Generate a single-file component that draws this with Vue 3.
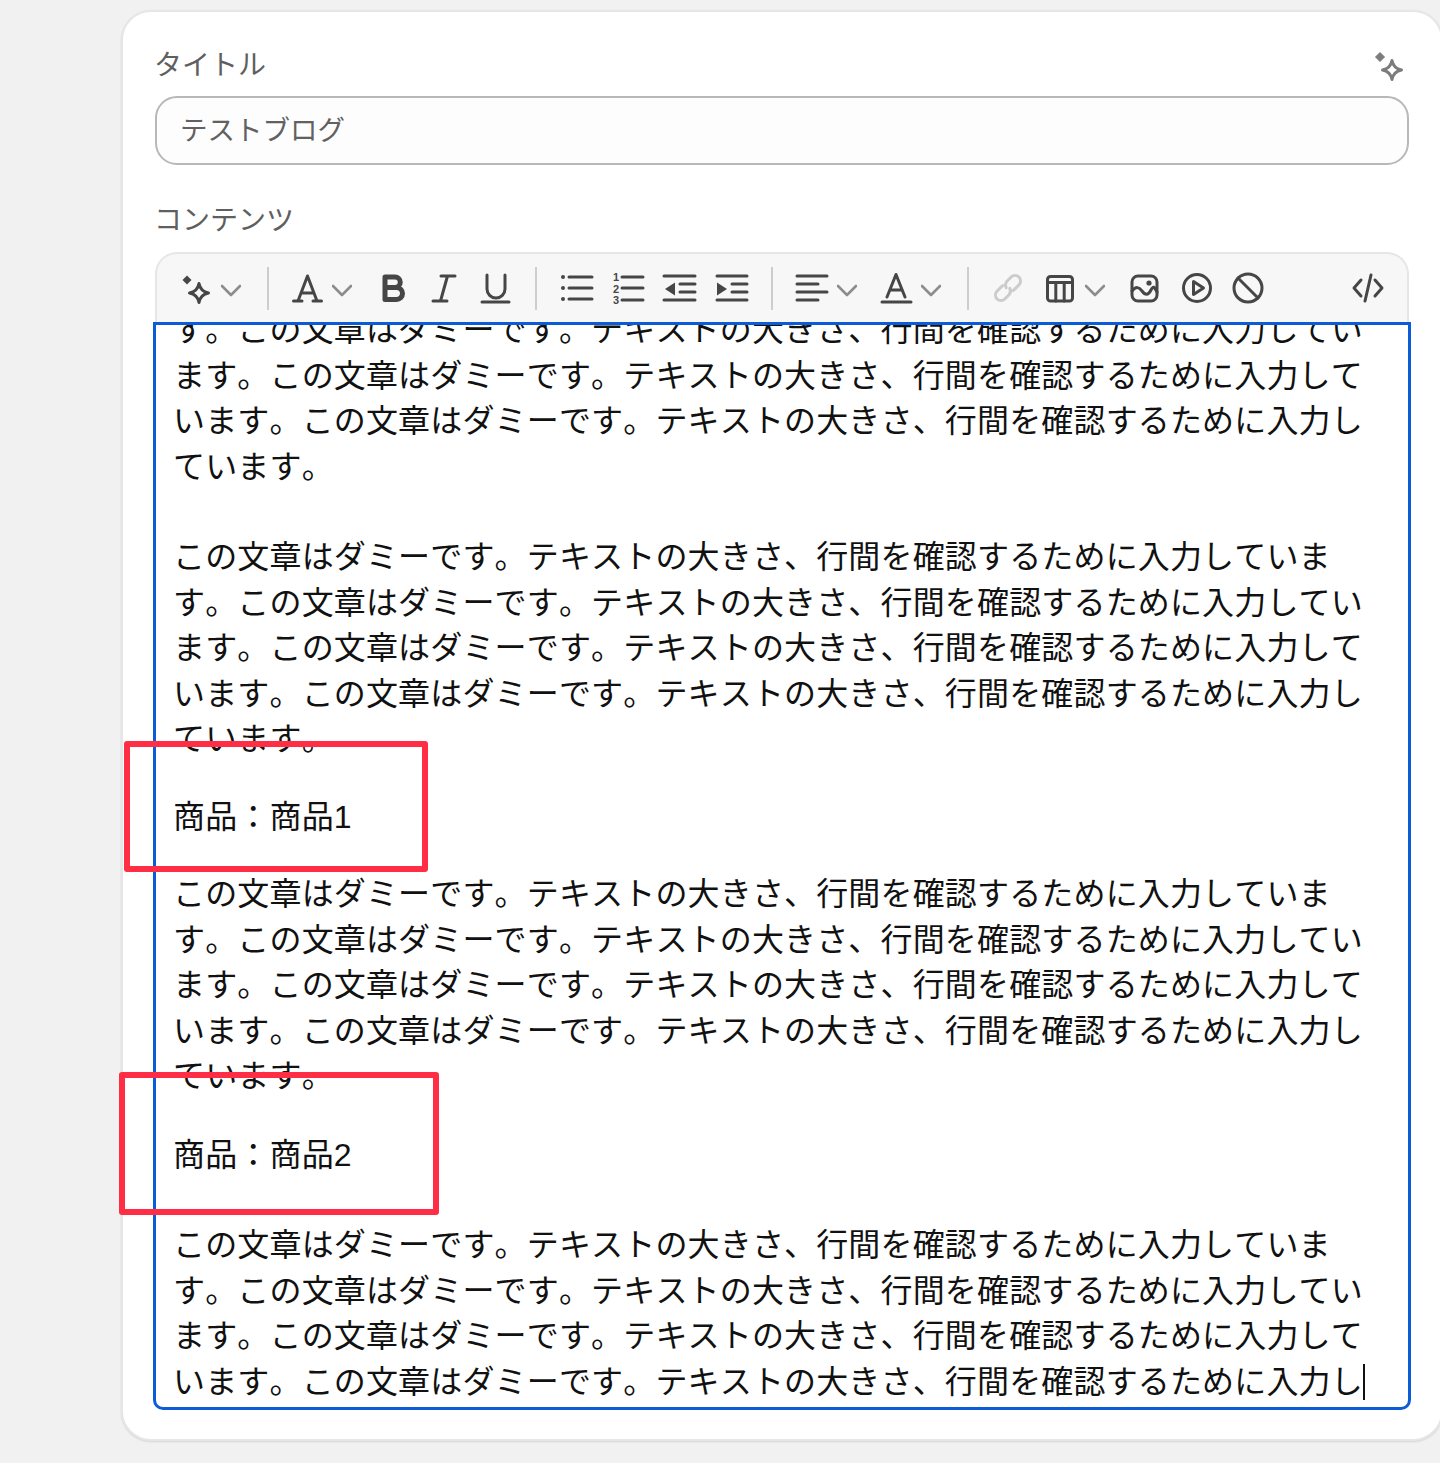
<script setup>
const sentence = 'この文章はダミーです。テキストの大きさ、行間を確認するために入力しています。'
const full = sentence.repeat(4)
const partial = full.slice(0, 147)
</script>

<template>
  <div class="page">
    <section class="card">
      <div class="label-row">
        <label class="label">タイトル</label>
        <svg class="ai-top" width="36" height="36" viewBox="0 0 36 36">
          <path class="spark-dot" d="M12 6.5 16.5 11 12 15.5 7.5 11Z" />
          <path class="spark" d="M24 14.5Q25.5 22.5 33.5 24 25.5 25.5 24 33.5 22.5 25.5 14.5 24 22.5 22.5 24 14.5Z" />
        </svg>
      </div>
      <div class="input"><span>テストブログ</span></div>
      <label class="label label-content">コンテンツ</label>

      <div class="toolbar">
        <div class="pair">
          <svg class="ic" viewBox="3 1 36 36">
            <path class="fill" d="M12 6.5 16.5 11 12 15.5 7.5 11Z" />
            <path d="M24 14.5Q25.5 22.5 33.5 24 25.5 25.5 24 33.5 22.5 25.5 14.5 24 22.5 22.5 24 14.5Z" />
          </svg>
          <svg class="chev" viewBox="0 0 20 36"><path d="M1 16 10 25 19 16" /></svg>
        </div>
        <span class="sep sep-first"></span>

        <div class="group group-format">
          <div class="pair pair-gap">
            <svg class="ic" viewBox="0 0 36 36"><path d="M9 31 18.5 6 28 31M12 23H25M4.5 31H13M24 31H32.5" /></svg>
            <svg class="chev" viewBox="0 0 20 36"><path d="M1 16 10 25 19 16" /></svg>
          </div>
          <svg class="ic" viewBox="0 0 36 36">
            <path class="bold" d="M10 7H20A5.25 5.25 0 0 1 20 17.5H10ZM10 17.5H21.5A6 6 0 0 1 21.5 29.5H10Z" />
          </svg>
          <svg class="ic" viewBox="0 0 36 36"><path d="M15 6H29M7 31H21M21.5 6 14.5 31" /></svg>
          <svg class="ic" viewBox="0 0 36 36"><path d="M10 5V19A9 9 0 0 0 28 19V5M5 32H32" /></svg>
        </div>
        <span class="sep"></span>

        <div class="group">
          <svg class="ic" viewBox="0 0 36 36">
            <circle class="fill" cx="5" cy="7" r="2" /><circle class="fill" cx="5" cy="18" r="2" /><circle class="fill" cx="5" cy="29" r="2" />
            <path d="M11 7H34M11 18H34M11 29H34" />
          </svg>
          <svg class="ic" viewBox="0 0 36 36">
            <text class="num" x="6" y="11">1</text><text class="num" x="6" y="22.5">2</text><text class="num" x="6" y="34">3</text>
            <path d="M12 7H33M12 18H33M12 30H33" />
          </svg>
          <svg class="ic" viewBox="0 0 36 36">
            <path d="M2 6H33M18 14H33M18 22H33M2 30H33" />
            <path class="fill" d="M13 12.5V25.5L3 19Z" />
          </svg>
          <svg class="ic" viewBox="0 0 36 36">
            <path d="M3 6H33M18 14H33M18 22H33M3 30H33" />
            <path class="fill" d="M3 12.5V25.5L13 19Z" />
          </svg>
        </div>
        <span class="sep"></span>

        <div class="group group-color">
          <div class="pair">
            <svg class="ic" viewBox="0 0 36 36"><path d="M3 6H33M3 14H24M3 22H33M3 30H24" /></svg>
            <svg class="chev" viewBox="0 0 20 36"><path d="M1 16 10 25 19 16" /></svg>
          </div>
          <div class="pair">
            <svg class="ic" viewBox="0 0 36 36"><path d="M9 27 18 4.5 27 27M12 20H24M4 32H33" /></svg>
            <svg class="chev" viewBox="0 0 20 36"><path d="M1 16 10 25 19 16" /></svg>
          </div>
        </div>
        <span class="sep sep-wide"></span>

        <div class="group">
          <svg class="ic ic-muted" viewBox="0 0 36 36">
            <g transform="rotate(-45 18 18)">
              <path d="M16 12.5H8A5.5 5.5 0 0 0 8 23.5H14A5.5 5.5 0 0 0 19 19.5" />
              <path d="M20 23.5H28A5.5 5.5 0 0 0 28 12.5H22A5.5 5.5 0 0 0 17 16.5" />
            </g>
          </svg>
          <div class="pair pair-gap-small">
            <svg class="ic" viewBox="0 0 36 36">
              <rect x="5.5" y="6.5" width="25" height="24.5" rx="3" />
              <path d="M5.5 12.5H30.5M13.8 12.5V31M22.2 12.5V31" />
            </svg>
            <svg class="chev" viewBox="0 0 20 36"><path d="M1 16 10 25 19 16" /></svg>
          </div>
          <svg class="ic" viewBox="0 0 36 36">
            <rect x="6" y="6" width="25" height="25" rx="6" />
            <circle class="fill" cx="23" cy="13" r="2.6" />
            <path d="M6 21C10 16 13 17 16 21S22 26 25 20 29 19 31 22" />
          </svg>
          <svg class="ic" viewBox="0 0 36 36">
            <circle cx="19" cy="18" r="13.5" />
            <path d="M15.5 11.5 25.5 18 15.5 24.5Z" />
          </svg>
          <svg class="ic" viewBox="0 0 36 36">
            <circle cx="18" cy="18" r="14" />
            <path d="M8 8 28 28" />
          </svg>
        </div>

        <svg class="ic ic-code" viewBox="0 0 36 36"><path d="M11 10 4 18 11 26M25 10 32 18 25 26M21 5 15 31" /></svg>
      </div>

      <div class="editor">
        <p class="para para-a">{{ full }}</p>
        <p class="para para-b">{{ full }}</p>
        <p class="para product product-a">商品：商品1</p>
        <p class="para para-c">{{ full }}</p>
        <p class="para product product-b">商品：商品2</p>
        <p class="para">{{ partial }}<span class="caret"></span></p>
      </div>
    </section>

    <div class="mark mark-one"></div>
    <div class="mark mark-two"></div>
  </div>
</template>

<style scoped>
.page {
  position: relative;
  width: 1440px;
  height: 1463px;
  overflow: hidden;
  box-sizing: border-box;
  padding: 10px 0 0 121px;
  font-family: "Noto Sans CJK JP", "Liberation Sans", sans-serif;
  font-kerning: none;
  font-feature-settings: "kern" 0, "palt" 0;
}
.card {
  box-sizing: border-box;
  width: 1322px;
  height: 1431px;
  padding: 34px 32px 0;
  background: #fff;
  border: 2px solid #e6e6e6;
  border-radius: 30px;
  box-shadow: 0 1px 2px rgba(0, 0, 0, 0.12);
}
.label-row {
  display: flex;
  justify-content: space-between;
  align-items: flex-start;
  height: 38px;
  padding-right: 5px;
}
.label {
  display: block;
  margin-left: -1px;
  font-size: 28px;
  line-height: 34px;
  color: #5f5f5f;
}
.ai-top {
  display: block;
}
.spark-dot {
  fill: #7c7c7c;
  stroke: #7c7c7c;
  stroke-width: 1;
  stroke-linejoin: round;
}
.spark {
  fill: none;
  stroke: #7c7c7c;
  stroke-width: 3;
  stroke-linejoin: round;
}
.input {
  box-sizing: border-box;
  height: 69px;
  margin-top: 12px;
  padding: 0 0 6px 23px;
  display: flex;
  align-items: center;
  font-size: 27.5px;
  color: #616161;
  background: #fdfdfd;
  border: 2px solid #b8b8b8;
  border-radius: 22px;
}
.label-content {
  margin-top: 36px;
}
.toolbar {
  box-sizing: border-box;
  height: 71px;
  margin-top: 17px;
  padding: 0 21px 1px 21px;
  display: flex;
  align-items: center;
  background: #f7f7f7;
  border: 2px solid #e6e6e6;
  border-bottom: 0;
  border-radius: 22px 22px 0 0;
}
.group {
  display: flex;
  align-items: center;
  gap: 16px;
}
.group-format {
  gap: 15px;
  padding-right: 1px;
}
.group-color {
  gap: 21px;
}
.pair {
  display: flex;
  align-items: center;
  gap: 7px;
}
.pair-gap {
  margin-right: 8px;
}
.pair-gap-small {
  margin-right: 5px;
}
.ic {
  display: block;
  flex: none;
  width: 36px;
  height: 36px;
  fill: none;
  stroke: #464646;
  stroke-width: 3;
  stroke-linejoin: round;
  stroke-linecap: round;
}
.ic-muted {
  stroke: #cccccc;
}
.ic-code {
  margin-left: auto;
}
.fill {
  fill: #464646;
  stroke: none;
}
.bold {
  stroke-width: 5;
}
.num {
  font-family: "Liberation Sans", sans-serif;
  font-size: 11px;
  font-weight: 700;
  text-anchor: middle;
  fill: #464646;
  stroke: none;
}
.chev {
  display: block;
  flex: none;
  width: 20px;
  height: 36px;
  fill: none;
  stroke: #8c8c8c;
  stroke-width: 2.6;
  stroke-linecap: round;
  stroke-linejoin: round;
}
.sep {
  flex: none;
  width: 2px;
  height: 43px;
  margin: 0 21px;
  background: #cdcdcd;
}
.sep-first {
  margin: 0 20px 0 26px;
}
.sep-wide {
  margin-left: 26px;
}
.editor {
  box-sizing: border-box;
  height: 1088px;
  margin: -1px -2px 0;
  padding: 0 40px 5px 17px;
  display: flex;
  flex-direction: column;
  justify-content: flex-end;
  overflow: hidden;
  background: #fff;
  border: 3px solid #0b5cd7;
  border-radius: 0 0 10px 10px;
}
.para {
  flex: none;
  margin: 0;
  font-size: 32px;
  line-height: 45.5px;
  letter-spacing: 0.16px;
  color: #111;
}
.para-a {
  margin-bottom: 45px;
}
.para-b {
  margin-bottom: 35px;
}
.para-c {
  margin-bottom: 36px;
}
.product {
  font-family: "Liberation Sans", "Noto Sans CJK JP", sans-serif;
}
.product-a {
  margin-bottom: 29px;
}
.product-b {
  margin-bottom: 42px;
}
.caret {
  display: inline-block;
  width: 2px;
  height: 36px;
  vertical-align: -7px;
  background: #111;
}
.mark {
  position: absolute;
  box-sizing: border-box;
  border: 6px solid #ff2e45;
  border-radius: 3px;
}
.mark-one {
  left: 124px;
  top: 741px;
  width: 304px;
  height: 131px;
}
.mark-two {
  left: 119px;
  top: 1072px;
  width: 320px;
  height: 143px;
}
</style>

<style>
html,
body {
  background: #f1f1f1;
}
</style>
